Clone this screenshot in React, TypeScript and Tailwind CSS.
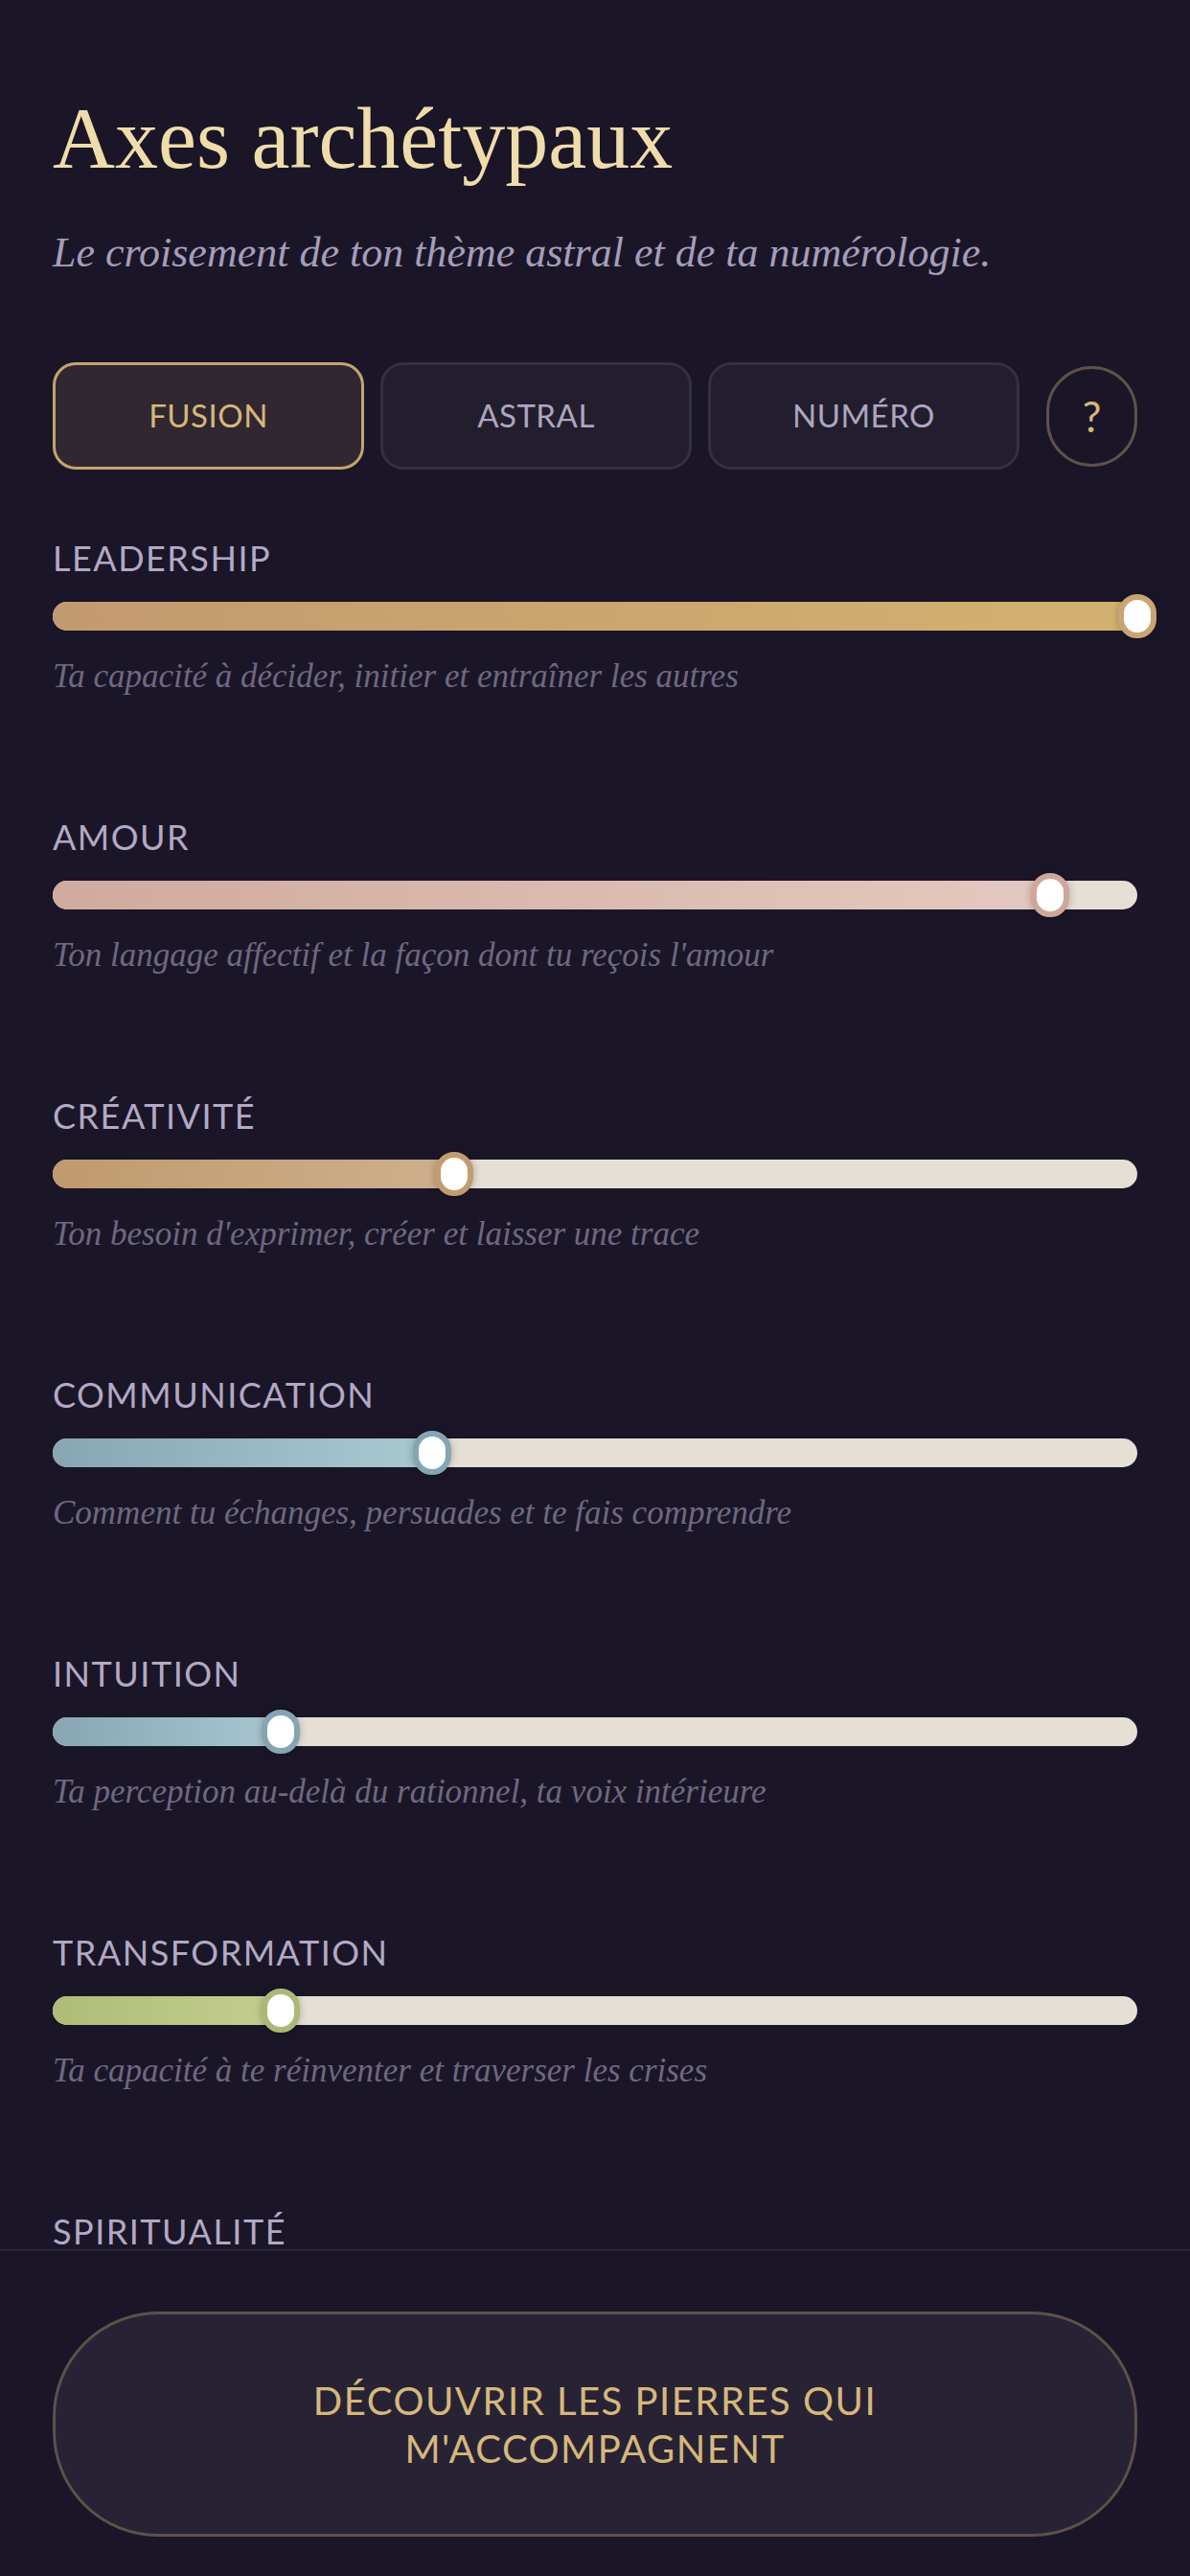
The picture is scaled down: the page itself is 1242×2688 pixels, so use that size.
import React from "react";

type Axis = {
  label: string;
  description: string;
  value: number;
  fill: string;
  thumb: string;
};

const AXES: Axis[] = [
  {
    label: "Leadership",
    description: "Ta capacité à décider, initier et entraîner les autres",
    value: 100,
    fill: "bg-gradient-to-r from-[#c29a6f] to-[#d3b270]",
    thumb: "border-[#c9a474]",
  },
  {
    label: "Amour",
    description: "Ton langage affectif et la façon dont tu reçois l'amour",
    value: 92,
    fill: "bg-gradient-to-r from-[#d0aa9d] to-[#e4c9c0]",
    thumb: "border-[#cfa79a]",
  },
  {
    label: "Créativité",
    description: "Ton besoin d'exprimer, créer et laisser une trace",
    value: 37,
    fill: "bg-gradient-to-r from-[#c09a6e] to-[#cdb08c]",
    thumb: "border-[#c29c70]",
  },
  {
    label: "Communication",
    description: "Comment tu échanges, persuades et te fais comprendre",
    value: 35,
    fill: "bg-gradient-to-r from-[#88a6b3] to-[#a9c9d3]",
    thumb: "border-[#86a5b2]",
  },
  {
    label: "Intuition",
    description: "Ta perception au-delà du rationnel, ta voix intérieure",
    value: 21,
    fill: "bg-gradient-to-r from-[#88a6b3] to-[#a9c7d1]",
    thumb: "border-[#86a5b2]",
  },
  {
    label: "Transformation",
    description: "Ta capacité à te réinventer et traverser les crises",
    value: 21,
    fill: "bg-gradient-to-r from-[#afbc78] to-[#c4cf8f]",
    thumb: "border-[#abb876]",
  },
  {
    label: "Spiritualité",
    description: "Ton lien au sens, au sacré et à l'invisible",
    value: 48,
    fill: "bg-gradient-to-r from-[#a595c0] to-[#c0b3d6]",
    thumb: "border-[#a595c0]",
  },
];

const TABS = ["Fusion", "Astral", "Numéro"];

const sans = "font-['Lato','Open_Sans',sans-serif]";
const serif = "font-['Liberation_Serif','DejaVu_Serif',serif]";

function AxisRow({ axis }: { axis: Axis }) {
  return (
    <div className="h-[291px]">
      <div className={`${sans} h-[46px] text-[36px] leading-[46px] uppercase tracking-[1.5px] text-[#b3a9c4]`}>
        {axis.label}
      </div>
      <div className="relative mt-[23px] h-[30px] rounded-full bg-[#e6dfd5]">
        <div className={`absolute inset-y-0 left-0 rounded-full ${axis.fill}`} style={{ width: `${axis.value}%` }} />
        <div
          className={`absolute top-1/2 h-[46px] w-[40px] -translate-x-1/2 -translate-y-1/2 rounded-full border-[6px] bg-white shadow-[0_0_8px_rgba(0,0,0,0.25)] ${axis.thumb}`}
          style={{ left: `${axis.value}%` }}
        />
      </div>
      <div className={`${serif} mt-[26px] text-[35px] leading-[44px] italic text-[#6f6880]`}>{axis.description}</div>
    </div>
  );
}

export default function App() {
  return (
    <div className="h-[2688px] overflow-hidden bg-[#1a1628] px-[55px] pt-[100px]">
      <h1 className={`${serif} text-[90px] leading-none font-normal text-[#efdcab]`}>Axes archétypaux</h1>
      <p className={`${serif} mt-[52px] text-[44px] leading-none italic text-[#a69dba]`}>
        Le croisement de ton thème astral et de ta numérologie.
      </p>

      <div className="mt-[92px] flex items-center">
        <div className="flex gap-[17px]">
          {TABS.map((tab, i) => (
            <button
              key={tab}
              type="button"
              className={`${sans} flex h-[112px] w-[325px] items-center justify-center rounded-[24px] border-[3px] text-[33px] uppercase tracking-[0.5px] ${
                i === 0
                  ? "border-[#c4a46d] bg-[#302730] text-[#d6b77c]"
                  : "border-[#34303f] bg-[#221e2d] text-[#aea5c0]"
              }`}
            >
              {tab}
            </button>
          ))}
        </div>
        <button
          type="button"
          className={`${sans} ml-[28px] flex h-[105px] w-[96px] items-center justify-center rounded-full border-[3px] border-[#5e5247] text-[44px] text-[#d6b77c]`}
        >
          ?
        </button>
      </div>

      <div className="mt-[69px]">
        {AXES.map((axis) => (
          <AxisRow key={axis.label} axis={axis} />
        ))}
      </div>

      <div className="fixed inset-x-0 bottom-0 h-[341px] border-t-[2px] border-[#2a2638] bg-[#1a1628] px-[55px] pt-[63px]">
        <button
          type="button"
          className={`${sans} flex h-[235px] w-full items-center justify-center rounded-[110px] border-[3px] border-[#5e5148] bg-[#272334] text-[40px] leading-[50px] uppercase tracking-[1.5px] text-[#d6b77c]`}
        >
          Découvrir les pierres qui
          <br />
          m'accompagnent
        </button>
      </div>
    </div>
  );
}
